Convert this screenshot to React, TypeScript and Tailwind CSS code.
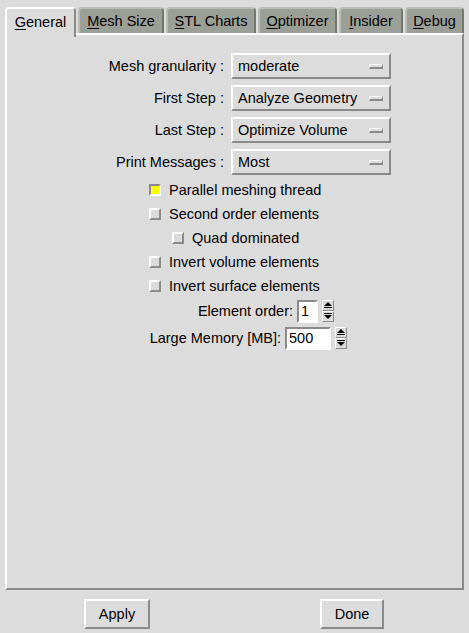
import React from "react";

const raised = "border-2 border-t-white border-l-white border-r-[#8a8a8a] border-b-[#8a8a8a]";
const sunken = "border-2 border-t-[#8a8a8a] border-l-[#8a8a8a] border-r-white border-b-white";

function Tab({ u, rest, w, selected }: { u: string; rest: string; w: number; selected?: boolean }) {
  if (selected) {
    return (
      <div
        style={{ width: w }}
        className="relative z-10 -mb-[2px] h-[30px] flex items-center justify-center bg-[#dcdcdc] border-2 border-b-0 border-t-white border-l-white border-r-[#8a8a8a] rounded-t-[4px] pb-[2px]"
      >
        <span><span className="underline underline-offset-2">{u}</span>{rest}</span>
      </div>
    );
  }
  return (
    <div
      style={{ width: w }}
      className="h-[26px] flex items-center justify-center bg-[#9b9f98] border-2 border-b-0 border-t-[#b9bdb5] border-l-[#b9bdb5] border-r-[#72766f] rounded-t-[4px]"
    >
      <span><span className="underline underline-offset-2">{u}</span>{rest}</span>
    </div>
  );
}

function Combo({ label, value }: { label: string; value: string }) {
  return (
    <div className="flex items-center h-[26px]">
      <div className="w-[217px] text-right">{label}</div>
      <div className={`ml-[7px] w-[160px] h-[26px] flex items-center justify-between pl-[5px] pr-[6px] ${raised}`}>
        <span>{value}</span>
        <span className="w-[14px] h-[5px] border border-t-white border-l-white border-r-[#8a8a8a] border-b-[#8a8a8a] border-b-2" />
      </div>
    </div>
  );
}

function Check({ label, checked, indent }: { label: string; checked?: boolean; indent: number }) {
  return (
    <div className="h-[24px] flex items-center" style={{ paddingLeft: indent }}>
      <span
        className={`w-[12px] h-[12px] ${
          checked
            ? "bg-[#ffff00] border-2 border-t-[#8a8a8a] border-l-[#8a8a8a] border-r-white border-b-white"
            : "bg-[#dcdcdc] border-2 border-t-white border-l-white border-r-[#8a8a8a] border-b-[#8a8a8a]"
        }`}
      />
      <span className="ml-[8px]">{label}</span>
    </div>
  );
}

function Arrow({ up }: { up?: boolean }) {
  return (
    <div className="w-[12px] h-[11px] border border-t-white border-l-white border-r-[#8a8a8a] border-b-[#8a8a8a] bg-[#dcdcdc] flex items-center justify-center">
      <svg width="8" height="7" viewBox="0 0 8 7">
        {up ? (
          <>
            <polygon points="4,0 8,4 0,4" fill="#000" />
            <rect x="0" y="5" width="8" height="1" fill="#000" />
          </>
        ) : (
          <>
            <rect x="0" y="0" width="8" height="1" fill="#000" />
            <polygon points="0,2 8,2 4,6" fill="#000" />
          </>
        )}
      </svg>
    </div>
  );
}

function Spin({ label, value, lw, ew, h }: { label: string; value: string; lw: number; ew: number; h: number }) {
  return (
    <div className="flex items-center" style={{ height: h }}>
      <div className="text-right" style={{ width: lw }}>{label}</div>
      <div
        className={`ml-[4px] h-[23px] bg-white flex items-center pl-[2px] ${sunken}`}
        style={{ width: ew }}
      >
        {value}
      </div>
      <div className="ml-[4px] flex flex-col">
        <Arrow up />
        <Arrow />
      </div>
    </div>
  );
}

export default function App() {
  return (
    <div
      className="w-[469px] h-[633px] bg-[#dcdcdc] text-black text-[14.5px] leading-none overflow-hidden"
      style={{ fontFamily: '"Liberation Sans", Arial, sans-serif' }}
    >
      <div className="h-[35px] flex items-end pl-[5px] gap-[2px]">
        <Tab u="G" rest="eneral" w={71} selected />
        <div className="flex items-end gap-[2px] mb-[2px]">
          <Tab u="M" rest="esh Size" w={86} />
          <Tab u="S" rest="TL Charts" w={90} />
          <Tab u="O" rest="ptimizer" w={79} />
          <Tab u="I" rest="nsider" w={64} />
          <Tab u="D" rest="ebug" w={59} />
        </div>
      </div>
      <div className={`mx-[5px] h-[557px] -mt-[2px] ${raised}`}>
        <div className="pt-[18px] flex flex-col gap-[6px]">
          <Combo label="Mesh granularity :" value="moderate" />
          <Combo label="First Step :" value="Analyze Geometry" />
          <Combo label="Last Step :" value="Optimize Volume" />
          <Combo label="Print Messages :" value="Most" />
        </div>
        <div className="mt-[3px] flex flex-col">
          <Check label="Parallel meshing thread" checked indent={142} />
          <Check label="Second order elements" indent={142} />
          <Check label="Quad dominated" indent={165} />
          <Check label="Invert volume elements" indent={142} />
          <Check label="Invert surface elements" indent={142} />
        </div>
        <Spin label="Element order:" value="1" lw={286} ew={21} h={26} />
        <Spin label="Large Memory [MB]:" value="500" lw={274} ew={46} h={28} />
      </div>
      <div className="flex mt-[9px]">
        <div className={`ml-[84px] w-[66px] h-[30px] flex items-center justify-center ${raised}`}>Apply</div>
        <div className={`ml-[170px] w-[64px] h-[30px] flex items-center justify-center ${raised}`}>Done</div>
      </div>
    </div>
  );
}
